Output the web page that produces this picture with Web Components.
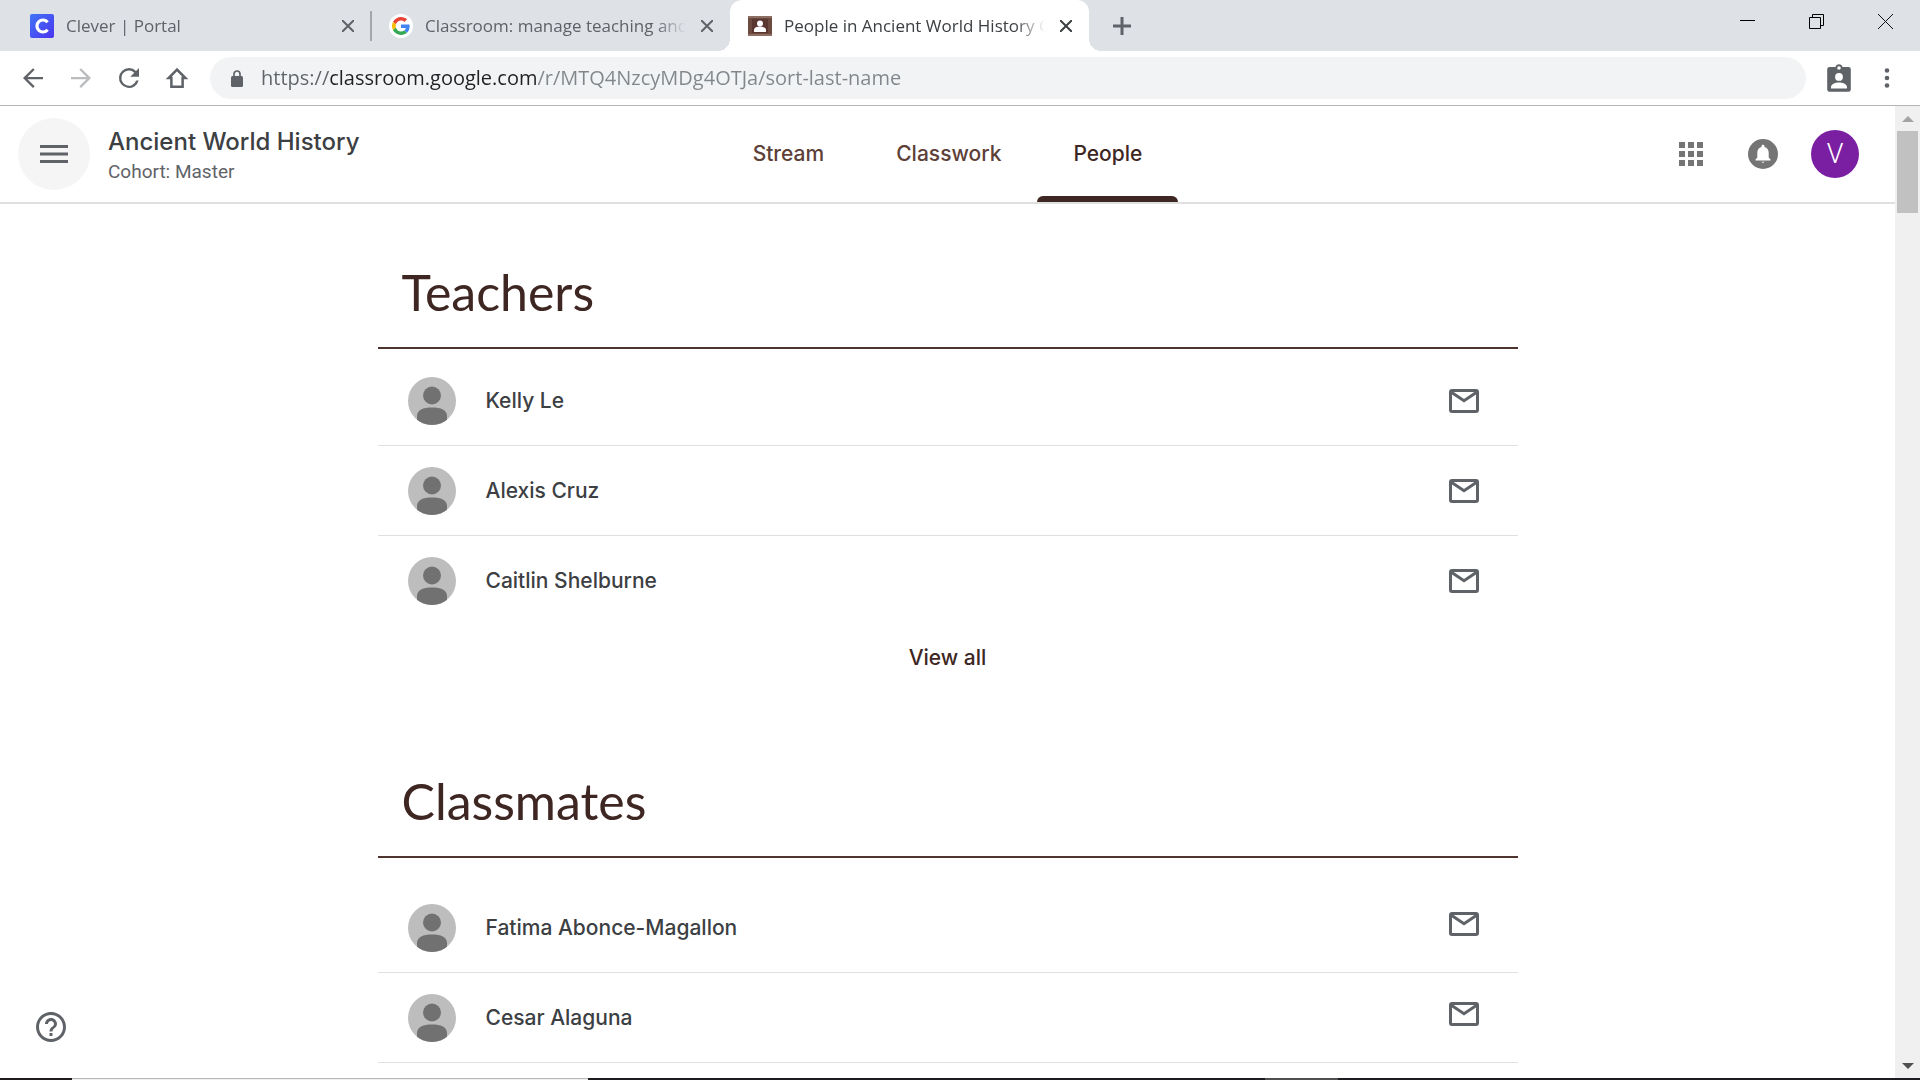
<!DOCTYPE html>
<html lang="en">
<head>
<meta charset="utf-8">
<title>People in Ancient World History</title>
<style>
  html, body { height: 100%; margin: 0; }
  body { background: #fff; color: #3c4043; font-family: Inter, "Liberation Sans", sans-serif; }
</style>
</head>
<body>
<desktop-screen>
  <browser-tabs slot="chrome">
    <browser-tab separator>
      <svg slot="icon" viewBox="0 0 24 24" width="24" height="24" aria-hidden="true"><defs><linearGradient id="cl" x1="0" y1="0" x2="1" y2="1"><stop offset="0" stop-color="#4274f6"/><stop offset="1" stop-color="#4a35f0"/></linearGradient></defs><rect width="24" height="24" rx="2" fill="url(#cl)"/><path d="M17.600 8.200A6 6 0 1 0 17.600 15.800" fill="none" stroke="#fff" stroke-width="3.200"/></svg>
      Clever | Portal
    </browser-tab>
    <browser-tab>
      <svg slot="icon" viewBox="-8 -8 64 64" width="24" height="24" aria-hidden="true"><circle cx="24" cy="24" r="32" fill="#fff"/><path fill="#EA4335" d="M24 9.500c3.540 0 6.710 1.220 9.210 3.600l6.850-6.850C35.900 2.380 30.470 0 24 0 14.620 0 6.510 5.380 2.560 13.220l7.980 6.190C12.430 13.720 17.740 9.500 24 9.500z"/><path fill="#4285F4" d="M46.980 24.550c0-1.570-.15-3.090-.38-4.550H24v9.020h12.940c-.58 2.960-2.260 5.480-4.780 7.180l7.730 6c4.510-4.180 7.090-10.360 7.090-17.650z"/><path fill="#FBBC05" d="M10.530 28.590c-.48-1.450-.76-2.990-.76-4.590s.27-3.140.76-4.590l-7.980-6.190C.92 16.460 0 20.120 0 24s.92 7.540 2.560 10.780l7.970-6.190z"/><path fill="#34A853" d="M24 48c6.480 0 11.930-2.130 15.890-5.810l-7.730-6c-2.150 1.450-4.920 2.300-8.160 2.300-6.260 0-11.570-4.220-13.470-9.910l-7.980 6.190C6.510 42.620 14.620 48 24 48z"/></svg>
      Classroom: manage teaching and learning
    </browser-tab>
    <browser-tab active>
      <svg slot="icon" viewBox="0 0 24 24" width="24" height="24" aria-hidden="true"><rect y="2" width="24" height="20" fill="#6d4a40"/><path d="M0 3H24M0 21H24" stroke="#8d6e63" stroke-width="2"/><rect x="4" y="5" width="16" height="14" fill="#5a382f"/><circle cx="12" cy="9.500" r="3" fill="#fff"/><path d="M6 18v-2c0-2.500 3-3.500 6-3.500s6 1 6 3.500v2z" fill="#fff"/></svg>
      People in Ancient World History Cohort
    </browser-tab>
  </browser-tabs>
  <browser-toolbar slot="chrome" url="https://classroom.google.com/r/MTQ4NzcyMDg4OTJa/sort-last-name"></browser-toolbar>

  <class-header>
    <span slot="title">Ancient World History</span>
    <span slot="subtitle">Cohort: Master</span>
    <nav-tab slot="nav">Stream</nav-tab>
    <nav-tab slot="nav">Classwork</nav-tab>
    <nav-tab slot="nav" active>People</nav-tab>
  </class-header>
  <people-section heading="Teachers" more>
    <person-row>Kelly Le</person-row>
    <person-row>Alexis Cruz</person-row>
    <person-row last>Caitlin Shelburne</person-row>
  </people-section>
  <people-section heading="Classmates" roomy>
    <person-row student>Fatima Abonce-Magallon</person-row>
    <person-row student>Cesar Alaguna</person-row>
  </people-section>

  <help-button slot="float"></help-button>
  <scroll-track slot="scroll"></scroll-track>
  <task-bar slot="taskbar"></task-bar>
</desktop-screen>

<script>
const base = `*,:host{box-sizing:border-box}button{border:0;padding:0;background:none;color:inherit;font:inherit;display:grid;place-items:center;cursor:pointer}svg{display:block}`;
function define(name, render) {
  customElements.define(name, class extends HTMLElement {
    constructor() {
      super();
      this.attachShadow({ mode: 'open' });
    }
    connectedCallback() {
      const t = document.createElement('template');
      t.innerHTML = `<style>${base}</style>` + render(this);
      this.shadowRoot.replaceChildren(t.content.cloneNode(true));
    }
  });
}

define('desktop-screen', () => `
<style>
  :host{display:flex;flex-direction:column;height:100vh;overflow:hidden}
  .view{flex:1;min-height:0;display:flex;position:relative}
  .page{flex:1;min-width:0;overflow:hidden}
</style>
<slot name="chrome"></slot>
<div class="view"><main class="page"><slot></slot></main><slot name="scroll"></slot><slot name="float"></slot></div>
<slot name="taskbar"></slot>`);

define('browser-tabs', () => `
<style>
  :host{display:flex;height:51px;background:#dee1e6;padding-left:12px}
  .new{width:42px;margin-left:12px;color:#5f6368}
  .controls{margin-left:auto;display:flex;height:43px}
  .controls button{width:69px}
</style>
<slot></slot>
<button class="new" aria-label="New tab"><svg width="18" height="18" viewBox="0 0 18 18"><path d="M9 0V18M0 9H18" stroke="currentColor" stroke-width="3"/></svg></button>
<div class="controls">
  <button aria-label="Minimize"><svg width="15" height="15"><path d="M0 6.500H15" stroke="#000"/></svg></button>
  <button aria-label="Restore"><svg width="15" height="15" fill="none"><path d="M.5 3.500h11v11h-11zM3.500 3.500v-3h11v11h-3" stroke="#000"/></svg></button>
  <button aria-label="Close"><svg width="15" height="15"><path d="M0 0L15 15M15 0L0 15" stroke="#111"/></svg></button>
</div>`);

define('browser-tab', () => `
<style>
  :host{display:flex;align-items:center;flex:0 1 359px;min-width:0;position:relative;padding:0 11px 0 18px;color:#5f6368;font:17px/24px "Open Sans","Noto Sans",sans-serif}
  :host([active]){background:#fff;border-radius:12px 12px 0 0;color:#3c4043}
  :host([active])::before,:host([active])::after{content:"";position:absolute;bottom:0;width:12px;height:12px}
  :host([active])::before{right:100%;background:radial-gradient(circle at 0 0,transparent 12px,#fff 12px)}
  :host([active])::after{left:100%;background:radial-gradient(circle at 100% 0,transparent 12px,#fff 12px)}
  :host([separator])::after{content:"";position:absolute;right:-1px;top:11px;width:2px;height:30px;background:#a3a6aa}
  .title{flex:1;min-width:0;height:24px;margin:0 9px 0 12px;overflow:hidden;white-space:nowrap;text-align:left;justify-content:start;-webkit-mask-image:linear-gradient(90deg,#000 calc(100% - 30px),transparent);mask-image:linear-gradient(90deg,#000 calc(100% - 30px),transparent)}
  .close{width:24px;height:24px;color:#5f6368}
  :host([active]) .close{color:#3c4043}
</style>
<slot name="icon"></slot>
<button class="title"><slot></slot></button>
<button class="close" aria-label="Close tab"><svg width="12" height="12"><path d="M0 0L12 12M12 0L0 12" stroke="currentColor" stroke-width="2"/></svg></button>`);

define('browser-toolbar', el => `
<style>
  :host{display:flex;align-items:center;height:55px;padding:0 9px;background:#fff;border-bottom:1px solid #b6b4b6;color:#5f6368}
  button{width:48px;height:42px}
  .off{color:#babcbe}
  .box{flex:1;display:flex;align-items:center;height:42px;margin:0 9px;padding:0 21px;gap:18px;border-radius:21px;background:#f1f3f4}
  input{flex:1;min-width:0;height:30px;border:0;padding:0;outline:0;font:20px/30px "Open Sans","Noto Sans",sans-serif;color:#5f6368;-webkit-text-fill-color:transparent;background:linear-gradient(90deg,#5f6368 69px,#202124 69px 276px,#80868b 276px);-webkit-background-clip:text;background-clip:text}
</style>
<button aria-label="Back"><svg width="30" height="30" viewBox="0 0 24 24" fill="currentColor"><path d="M20 11.100H7.600l5.700-5.700L12 4.100 4 12l8 7.900 1.300-1.300-5.700-5.700H20z"/></svg></button>
<button class="off" aria-label="Forward"><svg width="30" height="30" viewBox="0 0 24 24" fill="currentColor"><path d="M4 11.100h12.400l-5.700-5.700L12 4.100 20 12l-8 7.900-1.300-1.300 5.700-5.700H4z"/></svg></button>
<button aria-label="Reload"><svg width="30" height="30" viewBox="0 0 24 24" fill="currentColor"><path d="M17.650 6.350A7.950 7.950 0 0 0 12 4a8 8 0 1 0 7.730 10h-2a6.100 6.100 0 1 1-1.500-6.300L13 11h7V4z"/></svg></button>
<button aria-label="Home"><svg width="30" height="30" viewBox="0 0 24 24" fill="none" stroke="currentColor" stroke-width="2"><path d="M12 5.300L5.300 12H7.500V19H16.500V12H18.700Z"/></svg></button>
<div class="box">
  <svg width="12" height="17" viewBox="0 0 12 17" aria-hidden="true"><rect y="6" width="12" height="11" rx="1.500" fill="currentColor"/><path d="M3 7V4a3 3 0 0 1 6 0V7" fill="none" stroke="currentColor" stroke-width="1.700"/></svg>
  <input type="text" aria-label="Address" spellcheck="false" value="${el.getAttribute('url')}">
</div>
<button aria-label="Account"><svg width="24" height="30" viewBox="0 0 24 30"><path fill="currentColor" fill-rule="evenodd" d="M2.500 4H8.500a3.600 3.600 0 0 1 7 0H21.500A2.300 2.300 0 0 1 23.800 6.300V26.500A2.300 2.300 0 0 1 21.500 28.800H2.500A2.300 2.300 0 0 1 .2 26.500V6.300A2.300 2.300 0 0 1 2.500 4ZM12 3.200a1.800 1.800 0 1 0 0 3.600 1.800 1.800 0 0 0 0-3.600ZM12 10a3.900 3.900 0 1 0 0 7.800A3.900 3.900 0 0 0 12 10ZM4 25.500H20V24c0-3.200-5-4.500-8-4.500S4 20.800 4 24Z"/></svg></button>
<button aria-label="Menu"><svg width="6" height="20" fill="currentColor"><circle cx="3" cy="2.500" r="2.300"/><circle cx="3" cy="10" r="2.300"/><circle cx="3" cy="17.500" r="2.300"/></svg></button>`);

define('class-header', () => `
<style>
  :host{display:grid;grid-template-columns:1fr auto 1fr;height:98px;border-bottom:2px solid #e0e0e0}
  .left{display:flex;align-items:center;gap:18px;padding-left:18px;white-space:nowrap}
  .menu{width:72px;height:72px;border-radius:50%;background:#f5f5f5;color:#5f6368}
  .names{padding-top:6px}
  .title{margin:0;font-weight:500;font-size:24px;line-height:30px;color:#3c4043}
  .sub{font:19px/30px Roboto,sans-serif;color:#5f6368}
  nav{display:flex}
  .right{display:flex;align-items:center;justify-content:flex-end;padding-right:24px;color:#757575}
  .right button{width:72px;height:72px}
  .avatar{display:grid;place-items:center;width:48px;height:48px;border-radius:50%;background:#7b1fa2;color:#fff;font:300 27px/48px Roboto,sans-serif}
</style>
<div class="left">
  <button class="menu" aria-label="Main menu"><svg width="28" height="18"><path d="M0 1.500H28M0 9H28M0 16.500H28" stroke="currentColor" stroke-width="3"/></svg></button>
  <div class="names"><h1 class="title"><slot name="title"></slot></h1><div class="sub"><slot name="subtitle"></slot></div></div>
</div>
<nav><slot name="nav"></slot></nav>
<div class="right">
  <button aria-label="Google apps"><svg width="24" height="24" fill="currentColor"><path d="M0 0h6v6h-6zM9 0h6v6h-6zM18 0h6v6h-6zM0 9h6v6h-6zM9 9h6v6h-6zM18 9h6v6h-6zM0 18h6v6h-6zM9 18h6v6h-6zM18 18h6v6h-6z"/></svg></button>
  <button aria-label="Notifications"><svg width="30" height="30"><circle cx="15" cy="15" r="15" fill="currentColor"/><path fill="#fff" d="M15 5.800c-.9 0-1.500.6-1.500 1.500v.6C10.800 8.600 9.300 10.700 9.300 13.500V18.500L7.500 20.500V21.500H22.500V20.500L20.700 18.500V13.500C20.700 10.700 19.200 8.600 16.500 7.900V7.300c0-.9-.6-1.500-1.500-1.500ZM13.500 22.700a1.600 1.600 0 0 0 3 0Z"/></svg></button>
  <button aria-label="Account"><span class="avatar">V</span></button>
</div>`);

define('nav-tab', () => `
<style>
  :host{display:block}
  a{display:flex;align-items:center;position:relative;height:96px;padding:0 36px;color:#5d4037;text-decoration:none;font-weight:500;font-size:21px;line-height:30px}
  :host([active]) a{color:#3e2723}
  :host([active]) a::after{content:"";position:absolute;left:0;right:0;bottom:0;height:6px;border-radius:6px 6px 0 0;background:#3e2723}
</style>
<a href="#"><slot></slot></a>`);

define('people-section', el => `
<style>
  :host{display:block;max-width:1140px;margin:0 auto 23px}
  h2{margin:0;height:145px;padding:58px 24px 0;border-bottom:2px solid #4e342e;color:#3e2723;font:400 50px/60px Lato,sans-serif}
  .list{padding-top:7px}
  :host([roomy]) .list{padding-top:25px}
  .more{height:64px;display:grid;place-items:center}
  .more button{height:48px;padding:0 24px;color:#3e2723;font-weight:500;font-size:21px;line-height:30px}
</style>
<h2>${el.getAttribute('heading')}</h2>
<div class="list"><slot></slot></div>
${el.hasAttribute('more') ? '<div class="more"><button>View all</button></div>' : ''}`);

define('person-row', () => `
<style>
  :host{display:flex;align-items:center;height:90px;padding:0 30px;border-bottom:1px solid #e0e0e0}
  :host([last]){border-bottom-color:transparent}
  .name{flex:1;margin-left:30px;color:#3c4043;font-weight:500;font-size:21px;line-height:30px}
  button{width:48px;height:48px;color:#5f6368}
  :host([student]) button{height:56px;padding-bottom:8px}
  .body{fill:#717171}
</style>
<svg width="48" height="48" aria-hidden="true"><defs><clipPath id="c"><circle cx="24" cy="24" r="24"/></clipPath></defs><circle cx="24" cy="24" r="24" fill="#bdbdbd"/><g class="body" clip-path="url(#c)"><circle cx="24" cy="18.500" r="9"/><path d="M9 48V39C9 33 15 30.500 24 30.500S39 33 39 39V48Z"/></g></svg>
<span class="name"><slot></slot></span>
<button aria-label="Email"><svg width="30" height="24" viewBox="0 0 30 24" fill="none" stroke="currentColor" stroke-width="3"><rect x="1.500" y="1.500" width="27" height="21" rx="1.500"/><path d="M2 3L15 11.700L28 3"/></svg></button>`);

define('help-button', () => `
<style>
  :host{position:absolute;left:27px;bottom:27px;color:#5f6368}
  button{width:48px;height:48px}
</style>
<button aria-label="Help"><svg width="36" height="36" viewBox="0 0 24 24" fill="currentColor"><path d="M11 18h2v-2h-2v2zm1-16C6.480 2 2 6.480 2 12s4.480 10 10 10 10-4.480 10-10S17.520 2 12 2zm0 18c-4.410 0-8-3.590-8-8s3.590-8 8-8 8 3.590 8 8-3.590 8-8 8zm0-14c-2.210 0-4 1.790-4 4h2c0-1.100.9-2 2-2s2 .9 2 2c0 2-3 1.750-3 5h2c0-2.250 3-2.500 3-5 0-2.210-1.790-4-4-4z"/></svg></button>`);

define('scroll-track', () => `
<style>
  :host{display:flex;flex-direction:column;align-items:center;width:25px;background:#f0f0f0}
  .arrow{width:25px;height:25px;flex:none}
  .thumb{width:21px;height:82px;background:#c1c1c1}
  .down{margin-top:auto}
</style>
<button class="arrow" aria-label="Scroll up"><svg width="12" height="6"><path d="M0 6L6 0L12 6Z" fill="#a3a3a3"/></svg></button>
<div class="thumb"></div>
<button class="arrow down" aria-label="Scroll down"><svg width="12" height="6"><path d="M0 0L6 6L12 0Z" fill="#505050"/></svg></button>`);

define('task-bar', () => `
<style>
  :host{display:flex;height:2px;background:#1d1c20}
  .start{width:72px;background:#1f1a1c}
  .search{width:516px;background:#f0f0f0;border-top:1px solid #b8b8b8}
  .gap{width:677px}
  .app{width:73px;background:#505050}
</style>
<span class="start"></span><span class="search"></span><span class="gap"></span><span class="app"></span>`);
</script>
</body>
</html>
